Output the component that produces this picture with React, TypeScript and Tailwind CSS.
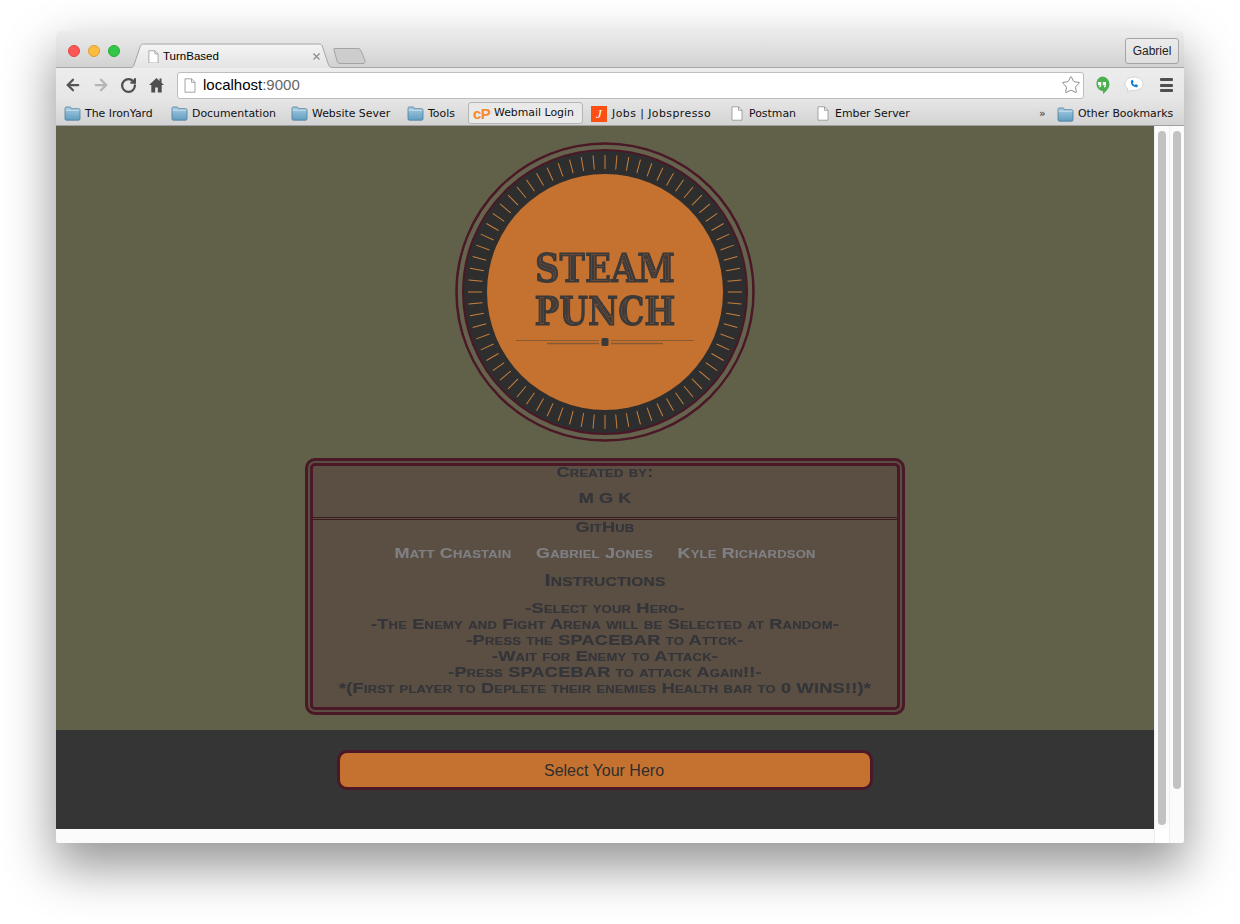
import { ArrowLeft, ArrowRight, RotateCw, Star, X } from "lucide-react"

const logoColor = "#c57230"
const wine = "#4a1826"

function Folder() {
  return (
    <svg width="17" height="15" viewBox="0 0 17 15" className="shrink-0">
      <defs>
        <linearGradient id="folderFill" x1="0" y1="0" x2="0" y2="1">
          <stop offset="0" stopColor="#a8cde2" />
          <stop offset="1" stopColor="#5f9dc0" />
        </linearGradient>
      </defs>
      <path d="M1 13V2.5C1 1.7 1.5 1 2.3 1h3.6c.6 0 1 .3 1.3 1l.4.7h7.1c.8 0 1.3.6 1.3 1.3V13c0 .7-.5 1.2-1.3 1.2H2.3C1.5 14.2 1 13.7 1 13z" fill="url(#folderFill)" stroke="#4f7f9c" strokeWidth="0.8" />
      <path d="M1.5 4.2h14" stroke="#d8eaf4" strokeWidth="0.8" />
    </svg>
  )
}

function PageIcon({ size = 12 }: { size?: number }) {
  return (
    <svg width={size} height={size * 1.25} viewBox="0 0 12 15" className="shrink-0">
      <path d="M1 .8h6.5L11 4.3v9.9H1z" fill="#fff" stroke="#9a9a9a" strokeWidth="0.9" />
      <path d="M7.5.8v3.5H11" fill="none" stroke="#9a9a9a" strokeWidth="0.9" />
    </svg>
  )
}

function Bookmark({ label, width, icon }: { label: string; width: string; icon: React.ReactNode }) {
  return (
    <div className={`flex items-center gap-[4px] ${width}`}>
      <span className="flex w-[17px] justify-center">{icon}</span>
      <span className="whitespace-nowrap">{label}</span>
    </div>
  )
}

function TitleBar() {
  return (
    <div className="flex h-[37px] items-start bg-gradient-to-b from-[#ececec] to-[#d2d2d2] border-b border-[#a8a8a8]">
      <div className="ml-[12px] mt-[14px] flex gap-[8px]">
        <span className="h-[12px] w-[12px] rounded-full bg-[#fc5753] border border-[#df4744]" />
        <span className="h-[12px] w-[12px] rounded-full bg-[#fdbc40] border border-[#de9f34]" />
        <span className="h-[12px] w-[12px] rounded-full bg-[#33c748] border border-[#27aa35]" />
      </div>
      <div className="relative ml-[9px] mt-[12px] h-[25px] w-[207px]">
        <svg width="207" height="25" viewBox="0 0 207 25" className="absolute inset-0">
          <defs>
            <linearGradient id="tabFill" x1="0" y1="0" x2="0" y2="1">
              <stop offset="0" stopColor="#f4f4f4" />
              <stop offset="1" stopColor="#e4e4e4" />
            </linearGradient>
          </defs>
          <path d="M0 25c3 0 4-1 5-3L11 4c.6-2 1.600-3 3.600-3H190c2 0 3 1 3.600 3l6 18c1 2 3 3 6.400 3" fill="url(#tabFill)" stroke="#a6a6a6" />
        </svg>
        <div className="relative flex h-full items-center pl-[19px] pt-[2px] font-['Liberation_Sans',sans-serif] text-[11.5px] text-black">
          <PageIcon size={11} />
          <span className="ml-[4px]">TurnBased</span>
          <X size={11} strokeWidth={2.5} className="absolute left-[182px] top-[8px] text-[#8a8a8a]" />
        </div>
      </div>
      <svg width="34" height="18" viewBox="0 0 34 18" className="ml-[-3px] mt-[16px]">
        <path d="M1 1.500h24c1.500 0 2.300.6 3 2l4 10c.5 1.500-.3 3-2 3H7c-1.500 0-2.300-.8-2.800-2L1 3c-.3-1 0-1.500 0-1.500z" fill="#cdcdcd" stroke="#a4a4a4" />
      </svg>
      <div className="ml-auto mr-[5px] mt-[7px] flex h-[26px] w-[54px] items-center justify-center rounded-[3px] border border-[#a5a5a5] bg-gradient-to-b from-[#ececec] to-[#dedede] font-['Liberation_Sans',sans-serif] text-[12px] text-[#222]">
        Gabriel
      </div>
    </div>
  )
}

function Toolbar() {
  return (
    <div className="flex h-[32px] items-center bg-gradient-to-b from-[#ededed] to-[#e6e6e6] pt-[2px]">
      <div className="ml-[8px] flex w-[113px] items-center">
        <ArrowLeft size={18} strokeWidth={3} className="text-[#555]" />
        <ArrowRight size={18} strokeWidth={3} className="ml-[10px] text-[#b5b5b5]" />
        <RotateCw size={17} strokeWidth={3.2} className="ml-[10px] text-[#4f4f4f]" />
        <svg width="17" height="16" viewBox="0 0 17 16" className="ml-[11px]">
          <path d="M8.500 1L1 8h2.300v7.500h3.900v-5h2.600v5h3.900V8H16l-2.500-2.300V1.500h-2v2.400z" fill="#4f4f4f" />
        </svg>
      </div>
      <div className="flex h-[27px] w-[907px] items-center rounded-[3px] border border-[#bdbdbd] bg-white pl-[6px] pr-[2px] font-['Liberation_Sans',sans-serif] text-[15px]">
        <PageIcon size={12} />
        <span className="ml-[7px] text-black">localhost</span>
        <span className="text-[#666]">:9000</span>
        <Star size={20} strokeWidth={1} className="ml-auto text-[#777]" />
      </div>
      <svg width="16" height="19" viewBox="0 0 16 19" className="ml-[10px]">
        <path d="M8 .5a7.500 7.500 0 0 1 7.500 7.500c0 4-3.500 7.500-6.500 10v-3H8A7.500 7.500 0 0 1 8 .5z" fill="#4caf50" />
        <path d="M4 6h3.200v3.200c0 1.300-.8 2.100-2 2.300v-1.200c.5-.1.8-.5.8-1.100H4zM8.800 6H12v3.200c0 1.300-.8 2.100-2 2.300v-1.200c.5-.1.8-.5.8-1.100h-2z" fill="#fff" />
      </svg>
      <svg width="20" height="18" viewBox="0 0 20 18" className="ml-[14px]">
        <path d="M10 1c5 0 9 2.800 9 6.800s-4 6.700-9 6.700c-1 0-2 0-2.800-.3L3 16l1-3.200C2 11.500 1 9.800 1 7.800 1 3.800 5 1 10 1z" fill="#fff" stroke="#d4d4d4" />
        <path d="M7.200 4.300l1.400-.5 1.200 2.200-1 .9c.4 1 1.200 1.800 2.200 2.200l1-1 2 1.300-.5 1.300c-.5.6-1.500.7-2.400.4-2.700-.9-4.300-2.700-4.200-5.200 0-.9.300-1.500.8-1.600z" fill="#0f7fd6" />
      </svg>
      <div className="ml-[16px] flex w-[13px] flex-col gap-[2.500px]">
        <span className="h-[3px] rounded-[1px] bg-[#4f4f4f]" />
        <span className="h-[3px] rounded-[1px] bg-[#4f4f4f]" />
        <span className="h-[3px] rounded-[1px] bg-[#4f4f4f]" />
      </div>
    </div>
  )
}

function BookmarksBar() {
  return (
    <div className="flex h-[26px] items-center border-b border-[#9f9f9f] bg-gradient-to-b from-[#e6e6e6] to-[#d3d3d3] pl-[8px] pt-[3px] font-['DejaVu_Sans',sans-serif] text-[10.900px] text-[#111]">
      <Bookmark label="The IronYard" width="w-[107px]" icon={<Folder />} />
      <Bookmark label="Documentation" width="w-[120px]" icon={<Folder />} />
      <Bookmark label="Website Sever" width="w-[116px]" icon={<Folder />} />
      <Bookmark label="Tools" width="w-[61px]" icon={<Folder />} />
      <div className="mt-[-3px] flex h-[22px] w-[115px] items-center rounded-[3px] border border-[#b5b5b5] bg-[#e9e9e9] pl-[4px] pt-[2px]">
        <span className="w-[21px] font-['Liberation_Sans',sans-serif] text-[15px] font-bold leading-none tracking-[-0.5px] text-[#f58a2b]">cP</span>
        <span className="whitespace-nowrap">Webmail Login</span>
      </div>
      <div className="ml-[8px] flex w-[140px] items-center">
        <span className="flex h-[16px] w-[16px] items-center justify-center bg-[#fb4f14] font-['Liberation_Serif',serif] text-[13px] italic text-white">J</span>
        <span className="ml-[5px] whitespace-nowrap tracking-[0.45px]">Jobs | Jobspresso</span>
      </div>
      <div className="flex w-[86px] items-center">
        <PageIcon size={12} />
        <span className="ml-[6px]">Postman</span>
      </div>
      <div className="flex w-[222px] items-center">
        <PageIcon size={12} />
        <span className="ml-[6px] whitespace-nowrap">Ember Server</span>
      </div>
      <span className="w-[18px] text-[#333]">»</span>
      <Folder />
      <span className="ml-[4px] whitespace-nowrap">Other Bookmarks</span>
    </div>
  )
}

function Logo() {
  const ticks = Array.from({ length: 72 }, (_, i) => i * 5)
  return (
    <svg width="300" height="300" viewBox="0 0 300 300" className="shrink-0">
      <defs>
        <filter id="inline" x="-5%" y="-5%" width="110%" height="110%">
          <feMorphology in="SourceAlpha" operator="erode" radius="1.600" result="inner" />
          <feMorphology in="SourceAlpha" operator="erode" radius="2.100" result="core" />
          <feComposite in="inner" in2="core" operator="out" result="ring" />
          <feFlood floodColor={logoColor} floodOpacity="0.85" />
          <feComposite in2="ring" operator="in" result="ringColor" />
          <feMerge>
            <feMergeNode in="SourceGraphic" />
            <feMergeNode in="ringColor" />
          </feMerge>
        </filter>
      </defs>
      <circle cx="150" cy="150" r="148.500" fill="none" stroke={wine} strokeWidth="2.500" />
      <circle cx="150" cy="150" r="147" fill="#65634d" />
      <circle cx="150" cy="150" r="142" fill="#2e2e2e" stroke={wine} strokeWidth="2" />
      {ticks.map((a) => (
        <line key={a} x1="150" y1="13" x2="150" y2="27" stroke="#c8803c" strokeWidth="1" transform={`rotate(${a} 150 150)`} />
      ))}
      <circle cx="150" cy="150" r="118" fill={logoColor} />
      <g fontFamily="'DejaVu Serif', serif" fontWeight="700" fontSize="39" fill="#3b3a3a" stroke="#3b3a3a" strokeWidth="1.100" textAnchor="middle" filter="url(#inline)">
        <text x="150" y="140" textLength="140" lengthAdjust="spacingAndGlyphs">STEAM</text>
        <text x="150" y="183" textLength="141" lengthAdjust="spacingAndGlyphs">PUNCH</text>
      </g>
      <path d="M61 198.500h83M156 198.500h83" stroke="#8a5a30" strokeWidth="1" />
      <path d="M92 201.500h52M156 201.500h52" stroke="#8a5a30" strokeWidth="1.500" />
      <rect x="146.500" y="196" width="7" height="8" rx="1.500" fill="#3b3a3a" />
    </svg>
  )
}

function InfoCard() {
  return (
    <div className="mt-[16px] h-[257px] w-[600px] rounded-[10px] border-[8px] border-double border-[#4a1826] bg-[#5a4f42] text-center font-['Liberation_Sans',sans-serif] text-[14px] font-bold tracking-[0.15px] text-[#34353a] [-webkit-text-stroke:0.15px] [font-variant:small-caps]">
      <div className="mt-[-2px] scale-x-[1.3] leading-[16px]">Created by:</div>
      <div className="mt-[10px] scale-x-[1.3] leading-[16px] tracking-normal">M G K</div>
      <div className="mt-[11px] h-[3px] border-y border-[#3a1c1e]" />
      <div className="mt-[-1px] scale-x-[1.3] leading-[16px]">GitHub</div>
      <div className="mt-[10px] flex scale-x-[1.3] justify-center gap-[19px] text-[13.900px] leading-[17px] text-[#7f7f84]">
        <span>Matt Chastain</span>
        <span>Gabriel Jones</span>
        <span>Kyle Richardson</span>
      </div>
      <div className="mt-[10px] scale-x-[1.3] text-[17px] leading-[18px]">Instructions</div>
      <div className="mt-[10px] scale-x-[1.3] leading-[16px]">
        <div>-Select your Hero-</div>
        <div>-The Enemy and Fight Arena will be Selected at Random-</div>
        <div>-Press the SPACEBAR to Attck-</div>
        <div>-Wait for Enemy to Attack-</div>
        <div>-Press SPACEBAR to attack Again!!-</div>
        <div>*(First player to Deplete their enemies Health bar to 0 WINS!!)*</div>
      </div>
    </div>
  )
}

function Scrollbar({ thumb, corner }: { thumb: string; corner?: boolean }) {
  return (
    <div className="flex w-[15px] flex-col justify-between border-l border-[#eeeeee] bg-[#fbfbfb] pt-[5px]">
      <div className={`ml-[3px] w-[8px] rounded-full bg-[#c2c2c2] ${thumb}`} />
      {corner && <div className="h-[14px] bg-white" />}
    </div>
  )
}

export default function App() {
  return (
    <div className="min-h-[924px] bg-white pl-[56px] pt-[31px]">
      <div className="w-[1128px] overflow-hidden rounded-t-[5px] rounded-b-[3px] shadow-[0_22px_50px_2px_rgba(0,0,0,0.42)]">
        <TitleBar />
        <Toolbar />
        <BookmarksBar />
        <div className="flex h-[717px]">
          <div className="flex w-[1098px] flex-col bg-[#fbfbfb]">
            <div className="flex h-[604px] flex-col items-center bg-[#616049] pt-[16px]">
              <Logo />
              <InfoCard />
            </div>
            <div className="h-[99px] bg-[#353535] pt-[20px]">
              <button className="mx-auto flex h-[40px] w-[536px] items-center justify-center rounded-[10px] border-[3px] border-[#4a1826] bg-[#c57230] pt-[1px] pr-[2px] font-['Liberation_Sans',sans-serif] text-[16px] text-[#2e2e2e]">
                Select Your Hero
              </button>
            </div>
          </div>
          <Scrollbar thumb="h-[694px]" corner />
          <Scrollbar thumb="h-[658px]" />
        </div>
      </div>
    </div>
  )
}
